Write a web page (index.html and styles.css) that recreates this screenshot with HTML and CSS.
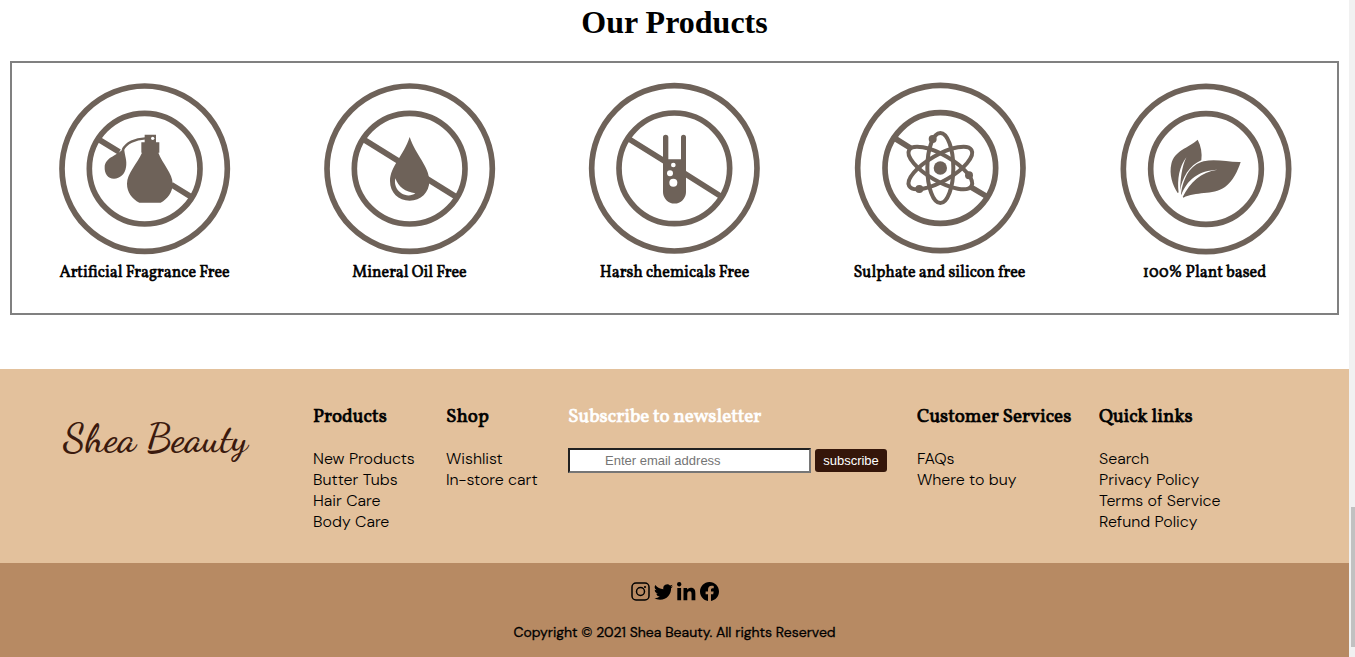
FILE: index.html
```html
<!DOCTYPE html>
<html lang="en">
<head>
<meta charset="utf-8">
<title>Shea Beauty</title>
<link rel="stylesheet" href="styles.css">
</head>
<body>
<div class="page">
  <main class="products">
    <h1 class="products-title">Our Products</h1>
    <ul class="claims">
      <li class="claim">
        <svg class="badge" viewBox="27 25 516 516" aria-hidden="true">
          <g class="line"><circle cx="284" cy="282" r="248"/><circle cx="284" cy="282" r="166"/><path d="M144 193L208 232M364 330L424 367"/></g>
          <path class="fill" d="M276 203h8v-23h34v23h10v31h-3c12 33 43 61 43 93 0 26-15 45-36 57H268c-22-12-37-31-37-57 0-32 31-60 45-93h-2v-31z"/>
          <path class="thin" d="M286 191C256 192 228 205 218 226"/>
          <path class="fill" d="M222 219C224 243 232 257 228 278C225 299 210 312 192 312C173 312 163 296 164 277C165 246 204 244 222 219z"/>
          <circle class="hole" cx="308" cy="191" r="5"/>
        </svg>
        <h2 class="claim-name">Artificial Fragrance Free</h2>
      </li>
      <li class="claim">
        <svg class="badge" viewBox="27 25 516 516" aria-hidden="true">
          <g class="line"><circle cx="284" cy="282" r="248"/><circle cx="284" cy="282" r="166"/><path d="M144 193L424 367"/></g>
          <path class="fill" d="M284 187C302 242 343 275 343 319C343 354 317 378 284 378C250 378 225 354 225 319C225 275 267 242 284 187z"/>
          <path class="hole" d="M241 311C250 337 271 352 301 356C290 364 273 365 259 356C243 345 237 328 241 311z"/>
        </svg>
        <h2 class="claim-name">Mineral Oil Free</h2>
      </li>
      <li class="claim">
        <svg class="badge" viewBox="27 25 516 516" aria-hidden="true">
          <g class="line"><circle cx="283" cy="281" r="248"/><circle cx="283" cy="281" r="166"/><path d="M144 191L256 261M310 294L424 366"/></g>
          <path class="fill" d="M249 188a8 8 0 0 1 16 0v66h38v-66a7 7 0 0 1 15 0v164a34 34 0 0 1-69 0z"/>
          <circle class="hole" cx="280" cy="271" r="7"/><circle class="hole" cx="270" cy="296" r="9"/><circle class="hole" cx="280" cy="324" r="12"/>
        </svg>
        <h2 class="claim-name">Harsh chemicals Free</h2>
      </li>
      <li class="claim">
        <svg class="badge" viewBox="27 25 516 516" aria-hidden="true">
          <g class="line"><circle cx="286" cy="280" r="248"/><circle cx="286" cy="280" r="166"/><path d="M148 190L198 221M374 335L426 366"/></g>
          <g class="orbit"><ellipse cx="286" cy="280" rx="39" ry="105"/><ellipse cx="286" cy="280" rx="39" ry="108" transform="rotate(60 286 280)"/><ellipse cx="286" cy="280" rx="39" ry="108" transform="rotate(-60 286 280)"/></g>
          <g class="fill"><circle cx="286" cy="280" r="20"/><circle cx="263" cy="193" r="12"/><circle cx="372" cy="302" r="12"/><circle cx="223" cy="343" r="12"/></g>
        </svg>
        <h2 class="claim-name">Sulphate and silicon free</h2>
      </li>
      <li class="claim">
        <svg class="badge" viewBox="27 25 516 516" aria-hidden="true">
          <g class="line"><circle cx="288" cy="283" r="248"/><circle cx="288" cy="283" r="166"/></g>
          <path class="fill" d="M263 195C273 214 277 235 274 257C238 272 216 309 209 352L203 355C187 330 177 299 184 268C193 227 234 221 263 195z"/>
          <path class="fill" d="M213 358C220 308 241 270 281 260C318 252 353 263 392 262C383 289 370 318 345 337C306 363 258 349 220 369z"/>
          <path class="vein" d="M206 355C201 313 208 276 229 248C215 278 211 314 210 355zM213 364C229 315 268 287 322 285C272 292 241 322 218 367z"/>
        </svg>
        <h2 class="claim-name">100% Plant based</h2>
      </li>
    </ul>
  </main>

  <footer class="footer">
    <div class="footer-top">
      <a class="logo" href="#">Shea Beauty</a>
      <nav class="col col-products">
        <h3 class="col-title">Products</h3>
        <a href="#">New Products</a><a href="#">Butter Tubs</a><a href="#">Hair Care</a><a href="#">Body Care</a>
      </nav>
      <nav class="col col-shop">
        <h3 class="col-title">Shop</h3>
        <a href="#">Wishlist</a><a href="#">In-store cart</a>
      </nav>
      <form class="col col-news">
        <h3 class="col-title light"><label for="email">Subscribe to newsletter</label></h3>
        <div class="subscribe">
          <input class="email" id="email" type="email" placeholder="Enter email address">
          <button class="send" type="button">subscribe</button>
        </div>
      </form>
      <nav class="col col-service">
        <h3 class="col-title">Customer Services</h3>
        <a href="#">FAQs</a><a href="#">Where to buy</a>
      </nav>
      <nav class="col">
        <h3 class="col-title">Quick links</h3>
        <a href="#">Search</a><a href="#">Privacy Policy</a><a href="#">Terms of Service</a><a href="#">Refund Policy</a>
      </nav>
    </div>
    <div class="footer-bottom">
      <div class="social">
        <a href="#" aria-label="Instagram"><svg viewBox="0 0 19 19"><g fill="none" stroke="#000" stroke-width="1.5"><rect x="1" y="1" width="17" height="17" rx="4"/><circle cx="9.500" cy="9.500" r="4"/></g><circle cx="14" cy="5" r="1.1"/></svg></a>
        <a href="#" aria-label="Twitter"><svg viewBox="0 0 16 16"><path d="M5.026 15c6.038 0 9.341-5.003 9.341-9.334 0-.14 0-.282-.006-.422A6.685 6.685 0 0 0 16 3.542a6.658 6.658 0 0 1-1.889.518 3.301 3.301 0 0 0 1.447-1.817 6.533 6.533 0 0 1-2.087.793A3.286 3.286 0 0 0 7.875 6.03a9.325 9.325 0 0 1-6.767-3.429 3.289 3.289 0 0 0 1.018 4.382A3.323 3.323 0 0 1 .64 6.575v.045a3.288 3.288 0 0 0 2.632 3.218 3.203 3.203 0 0 1-.865.115 3.23 3.23 0 0 1-.614-.057 3.283 3.283 0 0 0 3.067 2.277A6.588 6.588 0 0 1 .78 13.58a6.32 6.32 0 0 1-.78-.045A9.344 9.344 0 0 0 5.026 15z"/></svg></a>
        <a href="#" aria-label="LinkedIn"><svg viewBox="0 0 464 464"><path d="M100.28 448H7.4V148.9h92.88zM53.79 108.1C24.09 108.1 0 83.5 0 53.8a53.79 53.79 0 0 1 107.58 0c0 29.7-24.1 54.3-53.79 54.3zM447.9 448h-92.68V302.4c0-34.7-.7-79.2-48.29-79.2-48.29 0-55.69 37.7-55.69 76.7V448h-92.78V148.900h89.08v40.8h1.3c12.4-23.5 42.69-48.3 87.88-48.3 94 0 111.28 61.9 111.28 142.3V448z"/></svg></a>
        <a href="#" aria-label="Facebook"><svg viewBox="0 0 16 16"><path d="M16 8.049c0-4.446-3.582-8.05-8-8.05C3.58 0-.002 3.603-.002 8.05c0 4.017 2.926 7.347 6.75 7.951v-5.625h-2.03V8.05H6.75V6.275c0-2.017 1.195-3.131 3.022-3.131.876 0 1.791.157 1.791.157v1.98h-1.009c-.993 0-1.303.621-1.303 1.258v1.51h2.218l-.354 2.326H9.25V16c3.824-.604 6.75-3.934 6.75-7.951z"/></svg></a>
      </div>
      <p class="copyright">Copyright © 2021 Shea Beauty. All rights Reserved</p>
    </div>
  </footer>
</div>
<div class="scroll" aria-hidden="true"><div class="thumb"></div></div>
</body>
</html>
```
FILE: styles.css
```css
* { box-sizing: border-box; }
body {
  margin: 0;
  min-height: 100vh;
  display: grid;
  grid-template-columns: 1fr 6px;
  font-family: "DM Sans", Inter, sans-serif;
  color: #000;
  background: #fff;
}
h1, h2, h3, p, ul { margin: 0; padding: 0; }
a { color: inherit; text-decoration: none; }

.page { display: flex; flex-direction: column; }
.products { padding: 4px 10px 54px; }
.products-title {
  font: bold 32px/36px "Liberation Serif", serif;
  text-align: center;
  margin-bottom: 21px;
}
.claims {
  display: grid;
  grid-template-columns: repeat(5, 1fr);
  list-style: none;
  border: 2px solid #808080;
  padding: 20px 0 30px;
}
.claim { display: flex; flex-direction: column; align-items: center; }
.badge { width: 172px; height: 172px; display: block; overflow: visible; }
.claim-name {
  font: 400 16px/20px Vollkorn, "Liberation Serif", serif;
  -webkit-text-stroke: 0.6px;
  margin-top: 8px;
}
.line { fill: none; stroke: #6e6259; stroke-width: 17; }
.orbit { fill: none; stroke: #6e6259; stroke-width: 12; }
.thin { fill: none; stroke: #6e6259; stroke-width: 7; }
.fill { fill: #6e6259; }
.hole, .vein { fill: #fff; }

.footer { flex: 1; display: flex; flex-direction: column; }
.footer-top {
  display: flex;
  gap: 30px;
  padding: 36px 63px 31px;
  background: #e3c19c;
}
.logo {
  width: 220px;
  flex: none;
  padding-top: 9px;
  font: 600 40px/48px "Dancing Script", "Liberation Serif", cursive;
  color: #3b1a0e;
}
.col { display: flex; flex-direction: column; font-size: 16px; line-height: 21px; font-weight: 300; }
.col-title {
  font: 400 19px/24px Vollkorn, "Liberation Serif", serif;
  -webkit-text-stroke: 0.7px;
  margin-bottom: 19px;
  white-space: nowrap;
}
.light { color: #fff; }
.col-products { width: 103px; }
.col-shop { width: 92px; }
.col-products, .col-shop { flex: none; white-space: nowrap; }
.col-news { width: 319px; }
.col-service { width: 152px; }
.subscribe { display: flex; align-items: center; gap: 4px; }
.email {
  flex: 1;
  min-width: 0;
  height: 25px;
  padding: 1px 2px 1px 35px;
  border: 2px inset #767676;
  border-radius: 0;
  background: #fff;
  font: 13px "Liberation Sans", sans-serif;
}
.email::placeholder { color: #757575; }
.send {
  width: 72px;
  height: 23px;
  padding: 0;
  border: 0;
  border-radius: 3px;
  background: #35160a;
  color: #fff;
  font: 13px "Liberation Sans", sans-serif;
}
.footer-bottom {
  flex: 1;
  display: flex;
  flex-direction: column;
  align-items: center;
  padding-top: 19px;
  background: #b78a63;
}
.social { display: flex; gap: 4px; }
.social svg { width: 19px; height: 19px; display: block; }
.copyright { margin-top: 21px; font-size: 14px; line-height: 20px; font-weight: 400; -webkit-text-stroke: 0.3px; }

.scroll { background: #f1f1f1; padding: 507px 0 10px 2px; }
.thumb { height: 140px; background: #c1c1c1; }
```
